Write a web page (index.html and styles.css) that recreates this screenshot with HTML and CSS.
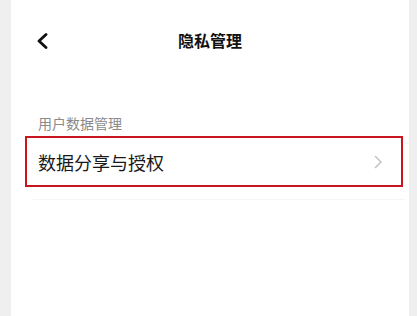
FILE: index.html
```html
<!DOCTYPE html>
<html lang="zh-CN">
<head>
<meta charset="utf-8">
<title>隐私管理</title>
<link rel="stylesheet" href="styles.css">
</head>
<body>
<div class="panel">
  <header class="header">
    <div class="back">
      <svg width="13" height="16" viewBox="0 0 13 16"><path d="M10 1.5 L3 8 L10 14.5" fill="none" stroke="#111" stroke-width="2.8" stroke-linecap="round" stroke-linejoin="round"/></svg>
    </div>
    <h1 class="title">隐私管理</h1>
    <div class="spacer"></div>
  </header>
  <section class="section">
    <div class="section-label">用户数据管理</div>
    <div class="row">
      <span class="row-text">数据分享与授权</span>
      <svg class="chev" width="9" height="14" viewBox="0 0 9 14"><path d="M1.5 1.5 L7 7 L1.5 12.5" fill="none" stroke="#c4c4c4" stroke-width="1.6" stroke-linecap="round" stroke-linejoin="round"/></svg>
    </div>
    <div class="divider"></div>
  </section>
</div>
</body>
</html>
```
FILE: styles.css
```css
html, body {
  margin: 0;
  padding: 0;
  height: 100%;
}
body {
  background: #efefef;
  font-family: "Noto Sans CJK SC", "Noto Sans", sans-serif;
}
.panel {
  margin-left: 11px;
  width: 398px;
  min-height: 316px;
  background: #fff;
}
.header {
  height: 80px;
  display: grid;
  grid-template-columns: 1fr auto 1fr;
  align-items: center;
}
.back {
  padding-left: 25px;
  padding-top: 1px;
  display: flex;
  align-items: center;
}
.title {
  margin: 0;
  font-size: 16px;
  font-weight: 700;
  color: #111;
  line-height: 20px;
}
.section {
  padding-top: 33px;
}
.section-label {
  padding-left: 27px;
  font-size: 14px;
  line-height: 21px;
  color: #8a8a8a;
}
.row {
  margin: 2px 6px 0 14px;
  height: 51px;
  box-sizing: border-box;
  border: 2px solid #c9151e;
  display: flex;
  align-items: center;
  justify-content: space-between;
  padding: 0 18px 0 11px;
}
.row-text {
  font-size: 18px;
  color: #1a1a1a;
  line-height: 24px;
}
.chev {
  display: block;
}
.divider {
  margin: 12px 4px 0 22px;
  height: 1px;
  background: #f6f6f6;
}
```
